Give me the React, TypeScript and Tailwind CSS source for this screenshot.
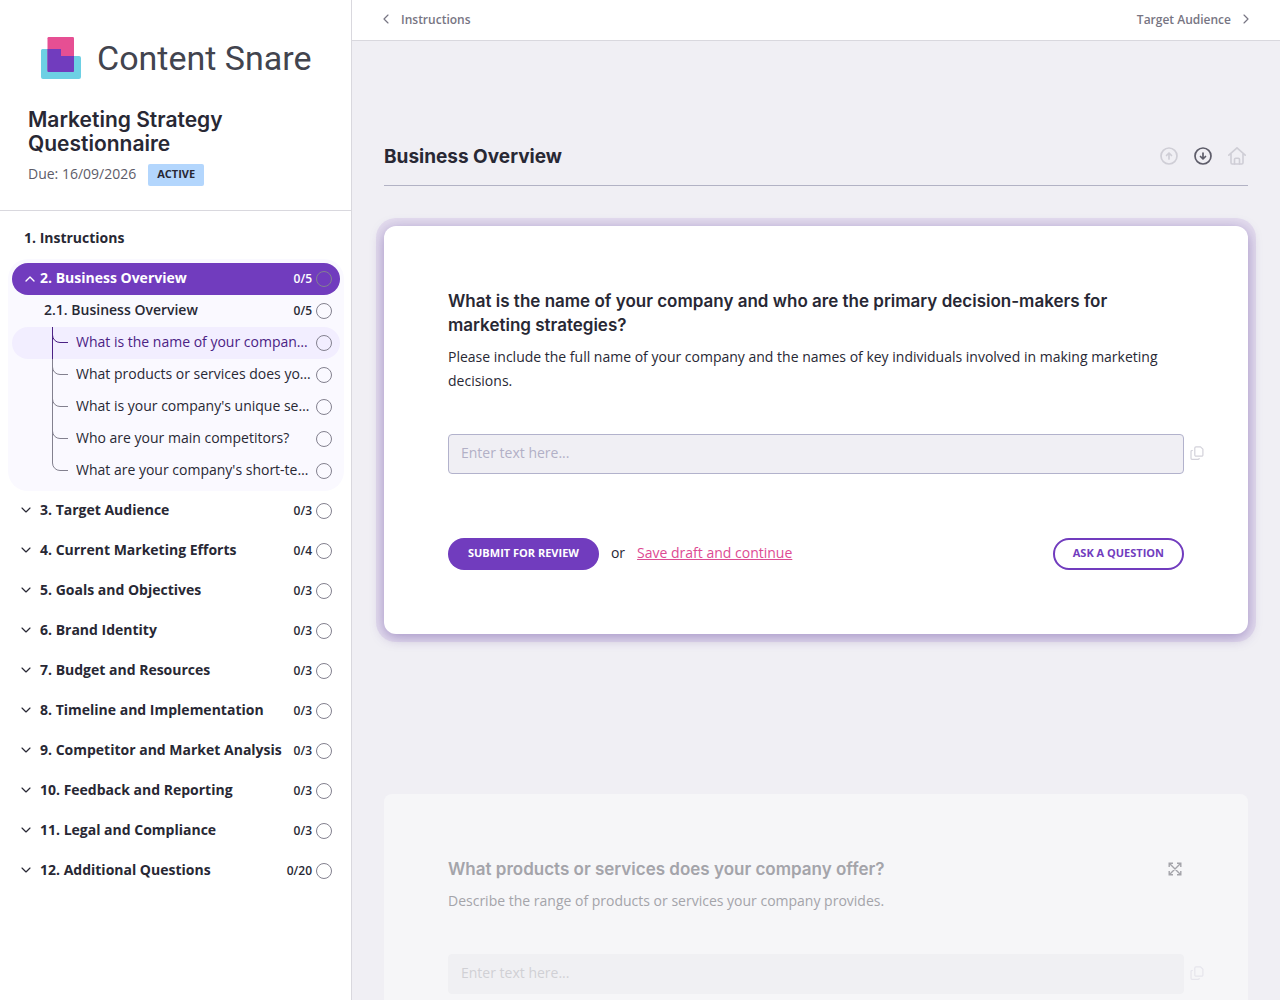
import { ChevronDown, ChevronLeft, ChevronRight, ChevronUp } from "lucide-react";

const activeQuestions = [
  "What is the name of your company and who are the primary decision-makers?",
  "What products or services does your company offer?",
  "What is your company's unique selling proposition?",
  "Who are your main competitors?",
  "What are your company's short-term and long-term goals?",
];

const sections = [
  { title: "3. Target Audience", count: "0/3" },
  { title: "4. Current Marketing Efforts", count: "0/4" },
  { title: "5. Goals and Objectives", count: "0/3" },
  { title: "6. Brand Identity", count: "0/3" },
  { title: "7. Budget and Resources", count: "0/3" },
  { title: "8. Timeline and Implementation", count: "0/3" },
  { title: "9. Competitor and Market Analysis", count: "0/3" },
  { title: "10. Feedback and Reporting", count: "0/3" },
  { title: "11. Legal and Compliance", count: "0/3" },
  { title: "12. Additional Questions", count: "0/20" },
];

function StatusCircle() {
  return <span className="size-4 shrink-0 rounded-full border border-[#83818f]" />;
}

function Logo() {
  return (
    <svg viewBox="0 0 276 44" className="h-11 w-[276px]" role="img" aria-label="Content Snare">
      <path d="M2.500 13H21v7h18a2 2 0 0 1 2 2v19a2 2 0 0 1-2 2H3a2 2 0 0 1-2-2V14.500A1.500 1.500 0 0 1 2.500 13z" fill="#6dd0e4" />
      <rect x="7.500" y="1" width="26.500" height="35" rx="1.200" fill="#e64f93" />
      <path d="M7.500 13H21v7h13v14.800a1.200 1.200 0 0 1-1.200 1.200H8.700a1.200 1.200 0 0 1-1.200-1.200z" fill="#713cbe" />
      <text x="57" y="34" fontSize="34" fill="#42444e" className="font-['Roboto',sans-serif]">
        Content Snare
      </text>
    </svg>
  );
}

function ArrowCircle({ up = false }: { up?: boolean }) {
  return (
    <svg viewBox="0 0 18 18" className="size-[18px]" fill="none" stroke="currentColor" strokeWidth="1.700" strokeLinecap="round" strokeLinejoin="round">
      <circle cx="9" cy="9" r="8" />
      {up ? <path d="M9 12V6.200M6.500 8.500 9 6l2.500 2.500" /> : <path d="M9 6v5.800M6.500 9.500 9 12l2.500-2.500" />}
    </svg>
  );
}

function HomeIcon() {
  return (
    <svg viewBox="0 0 18 18" className="size-[18px]" fill="none" stroke="currentColor" strokeWidth="1.600" strokeLinecap="round" strokeLinejoin="round">
      <path d="M.8 8.200 9 .8l8.200 7.400M3 6.500v9.300a1.200 1.200 0 0 0 1.200 1.200h9.600a1.200 1.200 0 0 0 1.200-1.200V6.500" />
      <path d="M6.500 17v-4.500a1.200 1.200 0 0 1 1.200-1.200h2.600a1.200 1.200 0 0 1 1.200 1.200V17" />
    </svg>
  );
}

function CopyIcon() {
  return (
    <svg viewBox="0 0 14 14" className="size-3.5" fill="none" stroke="currentColor" strokeWidth="1.200" strokeLinejoin="round">
      <path d="M6 .8h4.500l2.400 2.400V9a1.200 1.200 0 0 1-1.200 1.200H6A1.200 1.200 0 0 1 4.800 9V2A1.200 1.200 0 0 1 6 .8z" />
      <path d="M2.800 4.500H2a1 1 0 0 0-1 1v6.800a1 1 0 0 0 1 1h6.200a1 1 0 0 0 1-1V12" />
    </svg>
  );
}

function ExpandIcon() {
  return (
    <svg viewBox="0 0 14 14" className="size-3.5" fill="none" stroke="currentColor" strokeWidth="1.400">
      <path d="M1.200 5V1.200H5M9 1.200h3.800V5M12.800 9v3.800H9M5 12.800H1.200V9M1.500 1.500l11 11M12.500 1.500l-11 11" />
    </svg>
  );
}

function TreeBranch({ last, active }: { last: boolean; active: boolean }) {
  return (
    <svg viewBox="0 0 16 32" className="h-8 w-4 shrink-0" fill="none" stroke={active ? "#4b2284" : "#83818f"}>
      <path d="M.5 0v8a7.500 7.500 0 0 0 7.500 7.500h8" />
      {!last && <path d="M.5 0v32" />}
    </svg>
  );
}

function AnswerField({ id, label, dimmed = false }: { id: string; label: string; dimmed?: boolean }) {
  return (
    <div className="-mr-5 flex items-center gap-1.5">
      <label htmlFor={id} className="sr-only">{label}</label>
      <input
        id={id}
        type="text"
        placeholder="Enter text here..."
        className={
          dimmed
            ? "h-10 min-w-0 flex-1 rounded border border-[#f0f0f3] bg-[#f0f0f3] px-3 pb-1 text-sm placeholder:text-[#d0d0d5]"
            : "h-10 min-w-0 flex-1 rounded border border-[#b2b2cc] bg-[#f0eff4] px-3 pb-1 text-sm placeholder:text-[#b2b0c6]"
        }
      />
      <button aria-label="Copy" className={dimmed ? "pb-0.5 text-[#e6e5ec]" : "pb-0.5 text-[#d3d2da]"}>
        <CopyIcon />
      </button>
    </div>
  );
}

function Sidebar() {
  return (
    <aside className="flex w-[352px] shrink-0 flex-col border-r border-[#d9d8de] bg-white">
      <div className="border-b border-[#d9d8de] px-7 pt-9 pb-6">
        <div className="pl-3">
          <Logo />
        </div>
        <h1 className="mt-7 font-['Inter',sans-serif] text-[21px] leading-6 font-semibold">
          Marketing Strategy Questionnaire
        </h1>
        <div className="mt-2 flex items-center gap-3">
          <span className="pb-0.5 text-sm text-[#5d5c69]">Due: 16/09/2026</span>
          <span className="rounded-xs bg-[#b3d6fd] px-[9px] pb-0.5 text-[11px] leading-5 font-bold">ACTIVE</span>
        </div>
      </div>

      <nav className="pt-2 pr-[7px] pl-2 text-sm">
        <button className="flex h-10 w-full items-center px-4 pb-0.5 font-bold">1. Instructions</button>

        <div className="rounded-[20px] bg-[#faf9ff] p-1">
          <button aria-expanded="true" className="flex h-8 w-full items-center gap-1 rounded-full bg-[#713cbe] pr-2 pl-3 text-white">
            <ChevronUp className="-mx-0.5 size-4" strokeWidth={2} />
            <span className="flex-1 pb-0.5 text-left font-bold">2. Business Overview</span>
            <span className="text-xs font-semibold">0/5</span>
            <StatusCircle />
          </button>
          <button className="flex h-8 w-full items-center gap-1 pr-2 pl-8">
            <span className="flex-1 pb-0.5 text-left font-semibold">2.1. Business Overview</span>
            <span className="text-xs font-semibold">0/5</span>
            <StatusCircle />
          </button>
          {activeQuestions.map((question, i) => (
            <button
              key={question}
              className={`flex h-8 w-full items-center pr-2 pl-10 ${i === 0 ? "rounded-full bg-[#f2eeff] text-[#4b2284]" : ""}`}
            >
              <TreeBranch active={i === 0} last={i === activeQuestions.length - 1} />
              <span className="mr-1 ml-2 flex-1 truncate pb-0.5 text-left">{question}</span>
              <StatusCircle />
            </button>
          ))}
        </div>

        {sections.map((section) => (
          <button key={section.title} aria-expanded="false" className="flex h-10 w-full items-center gap-1 pr-3 pl-2.5">
            <ChevronDown className="mr-0.5 mb-0.5 size-4" strokeWidth={1.75} />
            <span className="flex-1 pb-0.5 text-left font-bold whitespace-nowrap">{section.title}</span>
            <span className="text-xs font-semibold">{section.count}</span>
            <StatusCircle />
          </button>
        ))}
      </nav>
    </aside>
  );
}

export default function App() {
  return (
    <div className="flex h-screen overflow-hidden bg-[#f0eff4] font-['Open_Sans',sans-serif] text-[#282834]">
      <Sidebar />

      <div className="flex min-w-0 flex-1 flex-col">
        <header className="flex h-[41px] shrink-0 items-center justify-between border-b border-[#d9d8de] bg-white px-[26px] text-xs font-semibold text-[#777583]">
          <a href="#instructions" className="flex items-center gap-[7px]">
            <ChevronLeft className="mb-0.5 size-4" strokeWidth={1.75} />
            Instructions
          </a>
          <a href="#target-audience" className="flex items-center gap-[7px]">
            Target Audience
            <ChevronRight className="mb-0.5 size-4" strokeWidth={1.75} />
          </a>
        </header>

        <main className="min-h-0 flex-1 overflow-hidden px-8">
          <div className="mt-[104px] flex items-center justify-between border-b border-[#b2b2c4] pb-4">
            <h2 className="font-['Inter',sans-serif] text-[19px] leading-6 font-bold">Business Overview</h2>
            <div className="flex gap-4 pr-0.5 pb-0.5 text-[#cfced6]">
              <button aria-label="Previous question">
                <ArrowCircle up />
              </button>
              <button aria-label="Next question" className="text-[#5d5c69]">
                <ArrowCircle />
              </button>
              <button aria-label="Home">
                <HomeIcon />
              </button>
            </div>
          </div>

          {/* Current question */}
          <section className="mt-10 rounded-xl bg-white px-16 pt-[63px] pb-16 shadow-[0_0_0_8px_rgba(113,60,190,0.1),0_3px_14px_rgba(60,30,130,0.4)]">
            <h3 className="font-['Inter',sans-serif] text-[17px] leading-6 font-semibold">
              What is the name of your company and who are the primary decision-makers for marketing strategies?
            </h3>
            <p className="mt-2 mb-[41px] text-sm leading-6">
              Please include the full name of your company and the names of key individuals involved in making marketing decisions.
            </p>
            <AnswerField id="company-name" label="Company name and decision-makers" />
            <div className="mt-16 flex items-center justify-between">
              <div className="flex items-center gap-3 text-sm">
                <button className="h-8 rounded-full bg-[#713cbe] px-5 pb-0.5 text-[11px] font-bold text-white">
                  SUBMIT FOR REVIEW
                </button>
                <span className="pb-0.5">or</span>
                <a href="#save-draft" className="pb-0.5 text-[#dd4b93] underline">Save draft and continue</a>
              </div>
              <button className="h-8 rounded-full border-2 border-[#713cbe] px-[18px] pb-0.5 text-[11px] font-bold text-[#713cbe]">
                ASK A QUESTION
              </button>
            </div>
          </section>

          {/* Upcoming question */}
          <section className="mt-40 rounded-lg bg-[#f6f6f8] px-16 pt-[63px] pb-16 text-[#a4a4aa]">
            <div className="flex items-center justify-between">
              <h3 className="font-['Inter',sans-serif] text-[17px] leading-6 font-semibold">
                What products or services does your company offer?
              </h3>
              <button aria-label="Expand question" className="pr-0.5">
                <ExpandIcon />
              </button>
            </div>
            <p className="mt-2 mb-[41px] text-sm leading-6">
              Describe the range of products or services your company provides.
            </p>
            <AnswerField id="products" label="Products or services" dimmed />
          </section>
        </main>
      </div>
    </div>
  );
}
